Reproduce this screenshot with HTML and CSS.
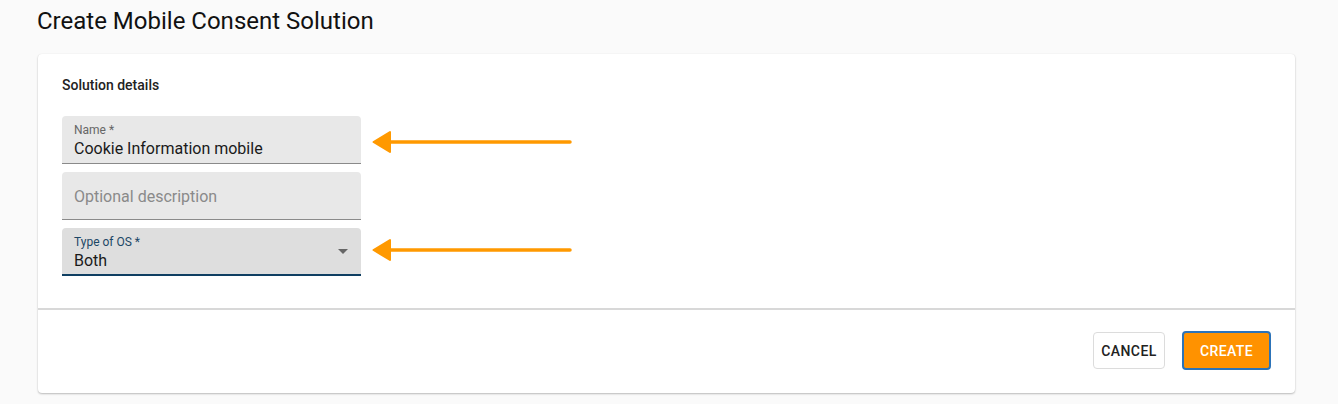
FILE: index.html
```html
<!DOCTYPE html>
<html>
<head>
<meta charset="utf-8">
<link rel="stylesheet" href="styles.css">
</head>
<body>
<h1 class="page-title">Create Mobile Consent Solution</h1>
<div class="card">
  <div class="card-body">
    <div class="section-title">Solution details</div>
    <div class="fields">
      <div class="row">
        <div class="field">
          <div class="label">Name *</div>
          <div class="value">Cookie Information mobile</div>
        </div>
        <svg class="arrow arrow-low" width="200" height="24" viewBox="0 0 200 24">
          <line x1="16" y1="12" x2="198" y2="12" stroke="#ff9900" stroke-width="3.5" stroke-linecap="round"/>
          <polygon points="1.5,12 18,2 18,22" fill="#ff9900" stroke="#ff9900" stroke-width="2" stroke-linejoin="round"/>
        </svg>
      </div>
      <div class="row">
        <div class="field">
          <div class="placeholder">Optional description</div>
        </div>
      </div>
      <div class="row">
        <div class="field select">
          <div class="label label-focus">Type of OS *</div>
          <div class="value">Both</div>
          <span class="caret"></span>
        </div>
        <svg class="arrow arrow-high" width="200" height="24" viewBox="0 0 200 24">
          <line x1="16" y1="12" x2="198" y2="12" stroke="#ff9900" stroke-width="3.5" stroke-linecap="round"/>
          <polygon points="1.5,12 18,2 18,22" fill="#ff9900" stroke="#ff9900" stroke-width="2" stroke-linejoin="round"/>
        </svg>
      </div>
    </div>
  </div>
  <div class="card-footer">
    <button class="btn btn-cancel">CANCEL</button>
    <button class="btn btn-create">CREATE</button>
  </div>
</div>
</body>
</html>
```

FILE: styles.css
```css
* { box-sizing: border-box; }
html, body { margin: 0; padding: 0; }
body {
  background: #fafafa;
  font-family: Roboto, "Liberation Sans", sans-serif;
  color: #111;
  width: 1338px;
  height: 404px;
  overflow: hidden;
}
.page-title {
  margin: 0;
  padding: 7px 0 0 37px;
  height: 54px;
  font-size: 24px;
  font-weight: 400;
  line-height: 28px;
  color: #111;
}
.card {
  margin-left: 38px;
  width: 1257px;
  height: 339px;
  background: #fff;
  border-radius: 4px;
  box-shadow: 0 1px 2px rgba(0,0,0,0.25), 0 0 1px rgba(0,0,0,0.08);
  display: flex;
  flex-direction: column;
}
.card-body {
  padding: 23px 24px 32px 24px;
  border-bottom: 2px solid #d8d8d8;
}
.section-title {
  font-size: 14px;
  font-weight: 500;
  line-height: 16px;
  color: #222;
  margin-bottom: 23px;
}
.fields {
  display: flex;
  flex-direction: column;
  gap: 8px;
}
.row {
  display: flex;
  align-items: center;
  height: 48px;
}
.field {
  position: relative;
  width: 299px;
  height: 48px;
  background: #e8e8e8;
  border-radius: 4px 4px 0 0;
  border-bottom: 1px solid #8a8a8a;
  padding: 7px 12px 0 12px;
  display: flex;
  flex-direction: column;
  justify-content: flex-start;
  flex-shrink: 0;
}
.label {
  font-size: 12px;
  line-height: 14px;
  color: #666;
}
.label-focus { color: #1c4766; }
.value {
  font-size: 16px;
  line-height: 20px;
  color: #1a1a1a;
  margin-top: 2px;
}
.placeholder {
  font-size: 16px;
  line-height: 20px;
  color: #8a8a8a;
  margin-top: 8px;
}
.select {
  background: #dedede;
  border-bottom: 2px solid #0f3f62;
}
.caret {
  position: absolute;
  right: 13px;
  top: 21px;
  width: 0;
  height: 0;
  border-left: 5px solid transparent;
  border-right: 5px solid transparent;
  border-top: 5px solid #666;
}
.arrow {
  margin-left: 11px;
  display: block;
  flex-shrink: 0;
}
.arrow-low { margin-top: 4px; }
.arrow-high { margin-bottom: 4px; }
.card-footer {
  flex: 1;
  display: flex;
  justify-content: flex-end;
  align-items: center;
  gap: 17px;
  padding: 0 24px 2px 0;
}
.btn {
  font-family: Roboto, "Liberation Sans", sans-serif;
  font-size: 14px;
  font-weight: 500;
  letter-spacing: 0.4px;
  border-radius: 4px;
  cursor: pointer;
}
.btn-cancel {
  width: 72px;
  height: 37px;
  background: #fff;
  color: #222;
  border: 1px solid #dcdcdc;
}
.btn-create {
  width: 89px;
  height: 39px;
  background: #ff9200;
  color: #fff;
  border: 2px solid #2c73b8;
}
```
